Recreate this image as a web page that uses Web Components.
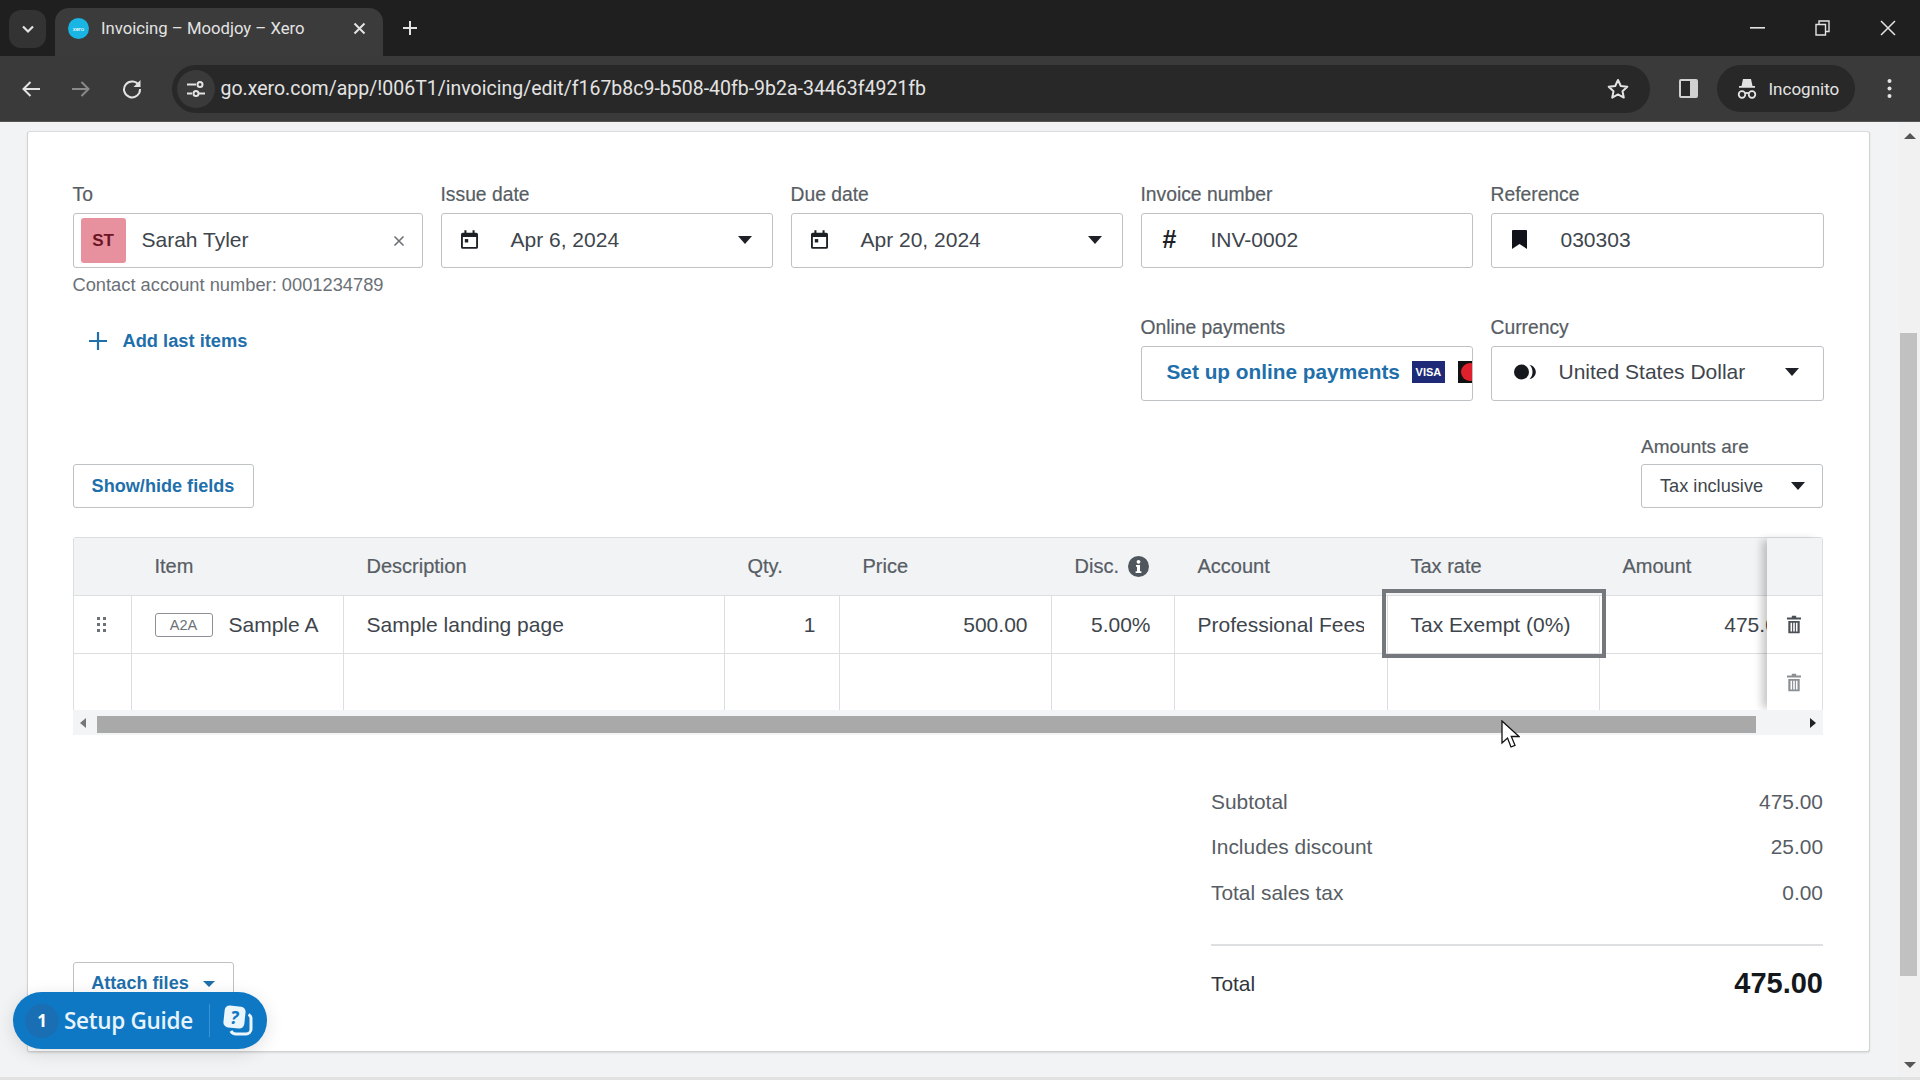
<!DOCTYPE html>
<html lang="en">
<head>
<meta charset="utf-8">
<title>Invoicing – Moodjoy – Xero</title>
<style>
  html, body { margin: 0; height: 100%; overflow: hidden; background: #f2f3f4; }
  body { display: flex; flex-direction: column; font-family: "Liberation Sans", Arial, sans-serif; }
</style>
</head>
<body>
<browser-chrome></browser-chrome>
<invoice-page></invoice-page>

<script>
const ICONS = {
    calendar: '<svg width="17" height="19" viewBox="0 0 20 22"><path fill="#1d2126" d="M4 0h2.400v3h7.200V0H16v3h2a2 2 0 0 1 2 2v15a2 2 0 0 1-2 2H2a2 2 0 0 1-2-2V5a2 2 0 0 1 2-2h2zM2.200 8v11.800h15.600V8z"/><rect x="4.500" y="10.500" width="4" height="4" fill="#1d2126"/></svg>',
    caret: '<svg width="14" height="8" viewBox="0 0 14 8"><path fill="#1d2126" d="M0 0h14L7 8z"/></svg>',
    bookmark: '<svg width="15" height="19" viewBox="0 0 15 19"><path fill="#10141a" d="M1 0h13a1 1 0 0 1 1 1v18l-7.500-5L0 19V1a1 1 0 0 1 1-1z"/></svg>',
    currency: '<svg width="22" height="16" viewBox="0 0 22 16"><circle cx="7.500" cy="8" r="7.500" fill="#15181d"/><path fill="#15181d" d="M15.500 .8c3.800 1 6.300 3.800 6.300 7.200s-2.500 6.200-6.300 7.200c2-2 3-4.400 3-7.200s-1-5.200-3-7.200z"/></svg>',
    plus: '<svg width="18" height="18" viewBox="0 0 18 18"><path fill="#1f6fab" d="M7.900 0h2.200v7.900H18v2.200h-7.900V18H7.900v-7.900H0V7.900h7.900z"/></svg>',
    clear: '<svg width="12" height="12" viewBox="0 0 12 12"><path stroke="#6b7177" stroke-width="1.600" d="M1.500 1.500l9 9M10.500 1.500l-9 9"/></svg>',
    info: '<svg width="21" height="21" viewBox="0 0 21 21"><circle cx="10.500" cy="10.500" r="10.500" fill="#50565d"/><circle cx="10.500" cy="5.800" r="1.900" fill="#fff"/><path fill="#fff" d="M8 9h4v6.300h1.400V17H7.600v-1.700H9v-4.600H8z"/></svg>',
    grip: '<svg width="10" height="16" viewBox="0 0 10 16" fill="#6d7278"><rect width="3" height="3"/><rect x="6" width="3" height="3"/><rect y="6" width="3" height="3"/><rect x="6" y="6" width="3" height="3"/><rect y="12" width="3" height="3"/><rect x="6" y="12" width="3" height="3"/></svg>',
    trash: '<svg width="14" height="19" viewBox="0 0 16 20"><path fill="currentColor" d="M5.500 0h5v2H16v2.400H0V2h5.500zM1.500 6h13v14h-13zM4 8v10h1.800V8zm3.100 0v10h1.800V8zm3.100 0v10H12V8z"/></svg>'
};

class UiIcon extends HTMLElement {
    constructor() {
        super();
        this.attachShadow({ mode: 'open' });
    }

    connectedCallback() {
        this.shadowRoot.innerHTML = `
            <style>
                :host { display: inline-flex; align-items: center; justify-content: center; flex: none; }
                svg { display: block; }
            </style>
            ${ICONS[this.getAttribute('name')] || ''}
        `;
    }
}
customElements.define('ui-icon', UiIcon);

class BrowserChrome extends HTMLElement {
    constructor() {
        super();
        this.attachShadow({ mode: 'open' });
        this._render();
    }

    _render() {
        this.shadowRoot.innerHTML = `
            <style>
                :host {
                    display: block;
                    flex: none;
                    font-family: Roboto, "Liberation Sans", sans-serif;
                    color: #e3e3e3;
                }
                svg { display: block; }
                .strip {
                    display: flex;
                    align-items: flex-end;
                    height: 56px;
                    background: #1f1f1f;
                    padding-left: 9px;
                    box-sizing: border-box;
                }
                .tabs-btn {
                    width: 37px;
                    height: 38px;
                    margin-bottom: 8px;
                    background: #333;
                    border-radius: 12px;
                    display: flex;
                    align-items: center;
                    justify-content: center;
                }
                .tab {
                    display: flex;
                    align-items: center;
                    width: 328px;
                    height: 48px;
                    margin-left: 9px;
                    padding: 0 17px 8px 13px;
                    box-sizing: border-box;
                    background: #3b3b3b;
                    border-radius: 14px 14px 0 0;
                    font-size: 16.700px;
                }
                .favicon {
                    width: 21px;
                    height: 21px;
                    border-radius: 50%;
                    background: #19b5e5;
                    color: #fff;
                    font-size: 6px;
                    display: flex;
                    align-items: center;
                    justify-content: center;
                    flex: none;
                }
                .title { flex: 1; margin-left: 12px; white-space: nowrap; }
                .new-tab { margin: 0 0 20px 19px; }
                .win { margin-left: auto; display: flex; align-self: stretch; align-items: center; }
                .win span { width: 65px; display: flex; justify-content: center; }
                .toolbar {
                    display: flex;
                    align-items: center;
                    height: 66px;
                    box-sizing: border-box;
                    background: #3a3a3a;
                    border-bottom: 1px solid #555;
                    padding-left: 21px;
                }
                .nav { width: 50.500px; display: flex; }
                .address {
                    display: flex;
                    align-items: center;
                    width: 1478px;
                    height: 48px;
                    margin-left: -1px;
                    background: #282828;
                    border-radius: 24px;
                    box-sizing: border-box;
                    padding: 0 21px 0 5px;
                }
                .site {
                    width: 38px;
                    height: 38px;
                    border-radius: 50%;
                    background: #3a3a3a;
                    display: flex;
                    align-items: center;
                    justify-content: center;
                    flex: none;
                }
                .url { margin-left: 6px; font-size: 19.500px; white-space: nowrap; flex: 1; }
                .panel { margin-left: 29px; }
                .incognito {
                    display: flex;
                    align-items: center;
                    gap: 12px;
                    width: 138px;
                    height: 47px;
                    margin-left: 19px;
                    padding-left: 20px;
                    box-sizing: border-box;
                    background: #282828;
                    border-radius: 24px;
                    font-size: 17px;
                }
                .menu { margin-left: 32px; }
            </style>
            <div class="strip">
                <div class="tabs-btn">
                    <svg width="14" height="9" viewBox="0 0 14 9"><path fill="none" stroke="#e3e3e3" stroke-width="2.200" d="M2 1.500l5 5 5-5"/></svg>
                </div>
                <div class="tab">
                    <span class="favicon">xero</span>
                    <span class="title">Invoicing – Moodjoy – Xero</span>
                    <svg width="13" height="13" viewBox="0 0 13 13"><path stroke="#e3e3e3" stroke-width="2" d="M1.500 1.500l10 10M11.500 1.500l-10 10"/></svg>
                </div>
                <div class="new-tab">
                    <svg width="16" height="16" viewBox="0 0 16 16"><path stroke="#e3e3e3" stroke-width="2" d="M8 1v14M1 8h14"/></svg>
                </div>
                <div class="win">
                    <span><svg width="15" height="2" viewBox="0 0 15 2"><rect width="15" height="1.600" fill="#e3e3e3"/></svg></span>
                    <span><svg width="15" height="16" viewBox="0 0 15 16"><path fill="none" stroke="#e3e3e3" stroke-width="1.400" d="M1 4.500h9.500V15H1zM4 4.500V1h10v10.500h-3.500"/></svg></span>
                    <span><svg width="16" height="16" viewBox="0 0 16 16"><path stroke="#e3e3e3" stroke-width="1.500" d="M1 1l14 14M15 1L1 15"/></svg></span>
                </div>
            </div>
            <div class="toolbar">
                <span class="nav"><svg width="19" height="18" viewBox="0 0 19 18"><path fill="none" stroke="#e3e3e3" stroke-width="2" d="M19 9H3M9.500 2L2.500 9l7 7"/></svg></span>
                <span class="nav"><svg width="19" height="18" viewBox="0 0 19 18"><path fill="none" stroke="#8a8a8a" stroke-width="2" d="M0 9h16M9.500 2l7 7-7 7"/></svg></span>
                <span class="nav"><svg width="20" height="20" viewBox="0 0 20 20"><path fill="none" stroke="#e3e3e3" stroke-width="2" d="M17 6.500A8 8 0 1 0 18 10"/><path fill="#e3e3e3" d="M18.500 1v7h-7z"/></svg></span>
                <div class="address">
                    <span class="site">
                        <svg width="18" height="16" viewBox="0 0 18 16"><g fill="none" stroke="#e3e3e3" stroke-width="2"><path d="M0 3.500h9M0 12.500h5"/><circle cx="13" cy="3.500" r="2.500"/><circle cx="9" cy="12.500" r="2.500"/></g><path stroke="#e3e3e3" stroke-width="2" d="M12 12.500h6"/></svg>
                    </span>
                    <span class="url">go.xero.com/app/!006T1/invoicing/edit/f167b8c9-b508-40fb-9b2a-34463f4921fb</span>
                    <svg width="22" height="21" viewBox="0 0 22 21"><path fill="none" stroke="#e3e3e3" stroke-width="2" stroke-linejoin="round" d="M11 2l2.800 6 6.500.8-4.800 4.400 1.300 6.400L11 16.400l-5.800 3.200 1.300-6.400L1.700 8.800 8.200 8z"/></svg>
                </div>
                <svg class="panel" width="19" height="19" viewBox="0 0 19 19"><rect x="1" y="1" width="17" height="17" rx="1" fill="#282828" stroke="#d0d0d0" stroke-width="2"/><rect x="11" y="1" width="7" height="17" fill="#d0d0d0"/></svg>
                <div class="incognito">
                    <svg width="20" height="20" viewBox="0 0 20 20" fill="#e3e3e3" style="flex:none"><path d="M6 0h8l1.500 7H18v1.800H2V7h2.500z"/><path fill="none" stroke="#e3e3e3" stroke-width="1.800" d="M8.300 15.500a3.300 3.300 0 1 1-6.600 0 3.300 3.300 0 0 1 6.600 0zM18.300 15.500a3.300 3.300 0 1 1-6.600 0 3.300 3.300 0 0 1 6.600 0zM8 14.500c1.300-.8 2.700-.8 4 0"/></svg>
                    <span>Incognito</span>
                </div>
                <svg class="menu" width="5" height="21" viewBox="0 0 5 21" fill="#e3e3e3"><circle cx="2.500" cy="3" r="2"/><circle cx="2.500" cy="10.500" r="2"/><circle cx="2.500" cy="18" r="2"/></svg>
            </div>
        `;
    }
}
customElements.define('browser-chrome', BrowserChrome);

class FormField extends HTMLElement {
    constructor() {
        super();
        this.attachShadow({ mode: 'open' });
    }

    connectedCallback() {
        const icon = this.getAttribute('icon');
        const caret = this.hasAttribute('caret');
        const wide = icon === 'currency' ? 'wide' : '';
        this.shadowRoot.innerHTML = `
            <style>
                :host { display: block; min-width: 0; }
                .label {
                    display: block;
                    height: 24px;
                    line-height: 26px;
                    margin-bottom: 7px;
                    font-size: 19.300px;
                    color: #575d64;
                    -webkit-text-stroke: 0.2px #575d64;
                    white-space: nowrap;
                }
                .box {
                    display: flex;
                    align-items: center;
                    height: 55px;
                    box-sizing: border-box;
                    border: 1px solid #bfc2c5;
                    border-radius: 3px;
                    background: #fff;
                    padding: 0 20px 2px 0;
                    color: #3e454c;
                    font-size: 21px;
                    overflow: hidden;
                }
                .box.wide { padding-right: 24px; }
                .icon { width: 69px; flex: none; display: flex; justify-content: center; padding-right: 13px; box-sizing: border-box; color: #1d2126; font-size: 25px; font-weight: bold; }
                .icon.wide { width: 67px; padding-right: 0; }
                .value { flex: 1; white-space: nowrap; }
                ::slotted(*) { flex: 1; }
            </style>
            <span class="label">${this.getAttribute('label')}</span>
            <div class="box ${wide}">
                ${icon ? `<span class="icon ${wide}">${icon === 'hash' ? '#' : `<ui-icon name="${icon}"></ui-icon>`}</span>` : ''}
                <span class="value">${this.getAttribute('value') || ''}</span>
                <slot></slot>
                ${caret ? '<ui-icon name="caret"></ui-icon>' : ''}
            </div>
        `;
    }
}
customElements.define('form-field', FormField);

class ContactField extends HTMLElement {
    constructor() {
        super();
        this.attachShadow({ mode: 'open' });
        this.shadowRoot.innerHTML = `
            <style>
                :host { display: block; }
                .label { display: block; height: 24px; line-height: 26px; margin-bottom: 7px; font-size: 19.300px; color: #575d64; -webkit-text-stroke: 0.2px #575d64; }
                .box {
                    display: flex;
                    align-items: center;
                    height: 55px;
                    box-sizing: border-box;
                    border: 1px solid #bfc2c5;
                    border-radius: 3px;
                    padding: 0 17px 0 7px;
                    font-size: 21px;
                    color: #3e454c;
                }
                .avatar {
                    width: 45px;
                    height: 45px;
                    border-radius: 3px;
                    background: #e8919e;
                    color: #6a1526;
                    font-size: 17px;
                    font-weight: bold;
                    display: flex;
                    align-items: center;
                    justify-content: center;
                    flex: none;
                }
                .name { flex: 1; margin-left: 16px; padding-bottom: 2px; }
                .note { display: block; margin-top: 5px; line-height: 24px; font-size: 18.300px; color: #6b7177; white-space: nowrap; }
            </style>
            <span class="label">To</span>
            <div class="box">
                <span class="avatar">ST</span>
                <span class="name">Sarah Tyler</span>
                <ui-icon name="clear"></ui-icon>
            </div>
            <span class="note">Contact account number: 0001234789</span>
        `;
    }
}
customElements.define('contact-field', ContactField);

class PaymentsLink extends HTMLElement {
    constructor() {
        super();
        this.attachShadow({ mode: 'open' });
        this.shadowRoot.innerHTML = `
            <style>
                :host { display: flex; align-items: center; margin-left: 25px; margin-right: -20px; white-space: nowrap; }
                a { color: #1f6fab; font-weight: bold; font-size: 20.800px; }
                .visa {
                    width: 33px;
                    height: 22px;
                    margin-left: 12px;
                    background: #1e2a78;
                    color: #fff;
                    font-size: 11px;
                    font-weight: bold;
                    display: flex;
                    align-items: center;
                    justify-content: center;
                    flex: none;
                }
                .mc { width: 33px; height: 22px; margin-left: 13px; background: #111; position: relative; overflow: hidden; flex: none; }
                .mc::after { content: ""; position: absolute; left: 3px; top: 2px; width: 18px; height: 18px; border-radius: 50%; background: #e0202c; }
            </style>
            <a>Set up online payments</a>
            <span class="visa">VISA</span>
            <span class="mc"></span>
        `;
    }
}
customElements.define('payments-link', PaymentsLink);

class InvoiceFields extends HTMLElement {
    constructor() {
        super();
        this.attachShadow({ mode: 'open' });
        this.shadowRoot.innerHTML = `
            <style>
                :host { display: block; }
                .grid {
                    display: grid;
                    grid-template-columns: 350.500px 332.500px 332.500px 332.500px 333px;
                    column-gap: 17.500px;
                    grid-template-rows: 114px auto;
                    row-gap: 18.500px;
                }
                .add {
                    grid-column: 1 / 4;
                    display: flex;
                    align-items: center;
                    gap: 16px;
                    margin: 14px 0 0 16px;
                    height: 24px;
                    color: #1f6fab;
                    font-weight: bold;
                    font-size: 18.300px;
                }
            </style>
            <div class="grid">
                <contact-field></contact-field>
                <form-field label="Issue date" icon="calendar" value="Apr 6, 2024" caret></form-field>
                <form-field label="Due date" icon="calendar" value="Apr 20, 2024" caret></form-field>
                <form-field label="Invoice number" icon="hash" value="INV-0002"></form-field>
                <form-field label="Reference" icon="bookmark" value="030303"></form-field>
                <div class="add"><ui-icon name="plus"></ui-icon><span>Add last items</span></div>
                <form-field label="Online payments"><payments-link></payments-link></form-field>
                <form-field label="Currency" icon="currency" value="United States Dollar" caret></form-field>
            </div>
        `;
    }
}
customElements.define('invoice-fields', InvoiceFields);

class TableControls extends HTMLElement {
    constructor() {
        super();
        this.attachShadow({ mode: 'open' });
        this.shadowRoot.innerHTML = `
            <style>
                :host { display: flex; justify-content: space-between; align-items: flex-end; }
                button {
                    height: 44px;
                    box-sizing: border-box;
                    border: 1px solid #bfc2c5;
                    border-radius: 3px;
                    background: #fff;
                    font-family: inherit;
                }
                .show { width: 181px; color: #1f6fab; font-weight: bold; font-size: 18.100px; padding: 0; }
                .label { display: block; line-height: 24px; margin-bottom: 5px; font-size: 19px; color: #575d64; -webkit-text-stroke: 0.2px #575d64; }
                .tax {
                    width: 182px;
                    display: flex;
                    align-items: center;
                    justify-content: space-between;
                    padding: 0 17px 0 18px;
                    font-size: 18.200px;
                    color: #3e454c;
                }
            </style>
            <button class="show">Show/hide fields</button>
            <div>
                <span class="label">Amounts are</span>
                <button class="tax"><span>Tax inclusive</span><ui-icon name="caret"></ui-icon></button>
            </div>
        `;
    }
}
customElements.define('table-controls', TableControls);

class LineItems extends HTMLElement {
    constructor() {
        super();
        this.attachShadow({ mode: 'open' });
        this._render();
    }

    _render() {
        const headers = ['', 'Item', 'Description', 'Qty.', 'Price', 'Disc.', 'Account', 'Tax rate', 'Amount'];
        const heads = headers.map((h) => `<div class="th">${h}${h === 'Disc.' ? '<ui-icon name="info"></ui-icon>' : ''}</div>`).join('');
        this.shadowRoot.innerHTML = `
            <style>
                :host { display: block; position: relative; color: #3e454c; font-size: 21px; }
                .wrap { display: flex; border: 1px solid #dcdee0; border-bottom: 0; border-radius: 3px 3px 0 0; height: 173px; box-sizing: border-box; }
                .scroller { width: 1693px; overflow: hidden; flex: none; position: relative; }
                .grid {
                    display: grid;
                    width: 1739px;
                    grid-template-columns: 58px 212px 381px 115px 212px 123px 213px 212px 213px;
                    grid-template-rows: 58px 58px 57px;
                }
                .th {
                    display: flex;
                    align-items: center;
                    gap: 9px;
                    padding-left: 23px;
                    background: #f2f3f5;
                    border-bottom: 1px solid #dcdee0;
                    font-size: 20px;
                    color: #575d64;
                    -webkit-text-stroke: 0.2px #575d64;
                    white-space: nowrap;
                }
                .td {
                    display: flex;
                    align-items: center;
                    border-right: 1px solid #dcdee0;
                    border-bottom: 1px solid #dcdee0;
                    padding: 0 23px;
                    box-sizing: border-box;
                    min-width: 0;
                    white-space: nowrap;
                    overflow: hidden;
                }
                .r { justify-content: flex-end; }
                .grip { padding: 0; justify-content: center; }
                .tag {
                    width: 56px;
                    height: 22px;
                    border: 1px solid #8d9196;
                    border-radius: 3px;
                    font-size: 14.500px;
                    color: #6b7177;
                    display: flex;
                    align-items: center;
                    justify-content: center;
                    margin-right: 16px;
                    flex: none;
                }
                .clip { overflow: hidden; }
                .focus {
                    position: absolute;
                    left: 1308px;
                    top: 51px;
                    width: 224px;
                    height: 69px;
                    box-sizing: border-box;
                    border: 4px solid #74787c;
                }
                .side { flex: 1; position: relative; display: grid; grid-template-rows: 58px 58px 57px; background: #fff; box-shadow: -7px 0 8px -2px rgba(0, 0, 0, .22); }
                .side div { display: flex; align-items: center; justify-content: center; border-bottom: 1px solid #dcdee0; }
                .side .h { background: #f2f3f5; }
                .hbar { display: flex; align-items: center; height: 25px; padding-top: 3px; box-sizing: border-box; background: #f3f4f5; position: relative; }
                .hbar i { display: block; flex: none; }
                .thumb { width: 1659px; height: 17px; margin-left: 24px; background: #a9a9a9; }
                .al { position: absolute; left: 7px; top: 8px; border: 5px solid transparent; border-left: 0; border-right: 6px solid #777; }
                .ar { position: absolute; right: 7px; top: 8px; border: 5px solid transparent; border-right: 0; border-left: 6px solid #222; }
            </style>
            <div class="wrap">
                <div class="scroller">
                    <div class="grid">
                        ${heads}
                        <div class="td grip"><ui-icon name="grip"></ui-icon></div>
                        <div class="td"><span class="tag">A2A</span><span>Sample A</span></div>
                        <div class="td">Sample landing page</div>
                        <div class="td r">1</div>
                        <div class="td r">500.00</div>
                        <div class="td r">5.00%</div>
                        <div class="td"><span class="clip">Professional Fees</span></div>
                        <div class="td">Tax Exempt (0%)</div>
                        <div class="td r">475.00</div>
                        <div class="td"></div><div class="td"></div><div class="td"></div><div class="td"></div>
                        <div class="td"></div><div class="td"></div><div class="td"></div><div class="td"></div><div class="td"></div>
                    </div>
                    <div class="focus"></div>
                </div>
                <div class="side">
                    <div class="h"></div>
                    <div style="color:#4a5056"><ui-icon name="trash"></ui-icon></div>
                    <div style="color:#8a8f94"><ui-icon name="trash"></ui-icon></div>
                </div>
            </div>
            <div class="hbar">
                <span class="al"></span>
                <i class="thumb"></i>
                <span class="ar"></span>
            </div>
        `;
    }
}
customElements.define('line-items', LineItems);

class SummaryTotals extends HTMLElement {
    constructor() {
        super();
        this.attachShadow({ mode: 'open' });
        this.shadowRoot.innerHTML = `
            <style>
                :host { display: block; width: 612px; color: #575d64; font-size: 20.900px; }
                .row { display: flex; justify-content: space-between; align-items: center; height: 45.500px; }
                hr { border: 0; border-top: 2px solid #dddfe1; margin: 28px 0 0; }
                .total { height: 76px; color: #30363c; }
                .total b { font-size: 29px; color: #14181d; }
            </style>
            <div class="row"><span>Subtotal</span><span>475.00</span></div>
            <div class="row"><span>Includes discount</span><span>25.00</span></div>
            <div class="row"><span>Total sales tax</span><span>0.00</span></div>
            <hr>
            <div class="row total"><span>Total</span><b>475.00</b></div>
        `;
    }
}
customElements.define('summary-totals', SummaryTotals);

class SetupGuide extends HTMLElement {
    constructor() {
        super();
        this.attachShadow({ mode: 'open' });
        this.shadowRoot.innerHTML = `
            <style>
                :host {
                    position: absolute;
                    left: 13px;
                    top: 992px;
                    width: 254px;
                    height: 57px;
                    display: flex;
                    align-items: center;
                    background: #0f78c4;
                    border-radius: 29px;
                    color: #e8f4fc;
                    font-family: "Open Sans", sans-serif;
                    box-shadow: 0 4px 18px rgba(0, 0, 0, .12);
                }
                .n {
                    width: 34px;
                    height: 34px;
                    margin-left: 12px;
                    border-radius: 50%;
                    background: #1a6fb4;
                    display: flex;
                    align-items: center;
                    justify-content: center;
                    font-weight: bold;
                    font-size: 17px;
                    color: #fff;
                }
                .t { margin-left: 5px; font-size: 22.500px; font-weight: 600; white-space: nowrap; letter-spacing: -.3px; }
                .d { width: 1px; height: 33px; margin-left: 16px; background: #3a93d2; }
                svg { margin-left: 13px; }
            </style>
            <span class="n">1</span>
            <span class="t">Setup Guide</span>
            <span class="d"></span>
            <svg width="30" height="31" viewBox="0 0 30 31">
                <path fill="none" stroke="#eaf5fc" stroke-width="3" d="M25.500 9.500c2 1 2.500 2 2.500 4V24a5 5 0 0 1-5 5H13c-2.500 0-4-1-5-3"/>
                <rect x="1" y="1" width="21" height="22" rx="5" transform="rotate(6 11 12)" fill="#eaf5fc"/>
                <text x="11.500" y="19" text-anchor="middle" font-family="Open Sans, sans-serif" font-weight="bold" font-style="italic" font-size="18" fill="#0f78c4">?</text>
            </svg>
        `;
    }
}
customElements.define('setup-guide', SetupGuide);

class InvoicePage extends HTMLElement {
    constructor() {
        super();
        this.attachShadow({ mode: 'open' });
        this.shadowRoot.innerHTML = `
            <style>
                :host { display: flex; flex: 1; min-height: 0; background: #f2f3f4; border-bottom: 3px solid #e2e2e2; }
                .main { flex: 1; min-width: 0; padding: 9px 29px 0 27px; }
                .card {
                    height: 921px;
                    box-sizing: border-box;
                    border: 1px solid #d0d2d4;
                    border-top-color: #dadcde;
                    border-radius: 3px;
                    background: #fff;
                    padding: 50px 46px 0 44.500px;
                    overflow: hidden;
                    box-shadow: 0 1px 2px rgba(0, 0, 0, .1);
                }
                table-controls { margin-top: 34.500px; }
                line-items { margin-top: 29px; }
                .foot { display: flex; justify-content: space-between; align-items: flex-start; margin-top: 44px; }
                .attach {
                    width: 161px;
                    height: 60px;
                    margin-top: 183px;
                    box-sizing: border-box;
                    border: 1px solid #bfc2c5;
                    border-radius: 3px;
                    display: flex;
                    gap: 14px;
                    justify-content: center;
                    padding-top: 8px;
                    color: #1f6fab;
                    font-weight: bold;
                    font-size: 18.100px;
                    line-height: 24px;
                }
                .attach i { margin-top: 10px; border: 6px solid transparent; border-top-color: #1f6fab; border-bottom: 0; height: 0; }
                .vbar { width: 21px; flex: none; position: relative; background: #f1f1f1; }
                .vthumb { position: absolute; left: 1px; right: 3px; top: 211px; height: 643px; background: #c1c1c1; }
                .up, .down { position: absolute; left: 5px; border: 6px solid transparent; border-top: 0; border-bottom: 6px solid #555; }
                .up { top: 11px; }
                .down { bottom: 9px; border-bottom: 0; border-top: 6px solid #555; }
                .cursor { position: absolute; left: 1501px; top: 720px; }
            </style>
            <div class="main">
                <div class="card">
                    <invoice-fields></invoice-fields>
                    <table-controls></table-controls>
                    <line-items></line-items>
                    <div class="foot">
                        <div class="attach"><span>Attach files</span><i></i></div>
                        <summary-totals></summary-totals>
                    </div>
                </div>
            </div>
            <div class="vbar"><span class="up"></span><i class="vthumb"></i><span class="down"></span></div>
            <setup-guide></setup-guide>
            <svg class="cursor" width="19" height="29" viewBox="0 0 19 29"><path fill="#fff" stroke="#111" stroke-width="1.300" d="M1 1v22l5.500-5 3.500 9 4-1.700-3.700-8.800H18z"/></svg>
        `;
    }
}
customElements.define('invoice-page', InvoicePage);
</script>
</body>
</html>
